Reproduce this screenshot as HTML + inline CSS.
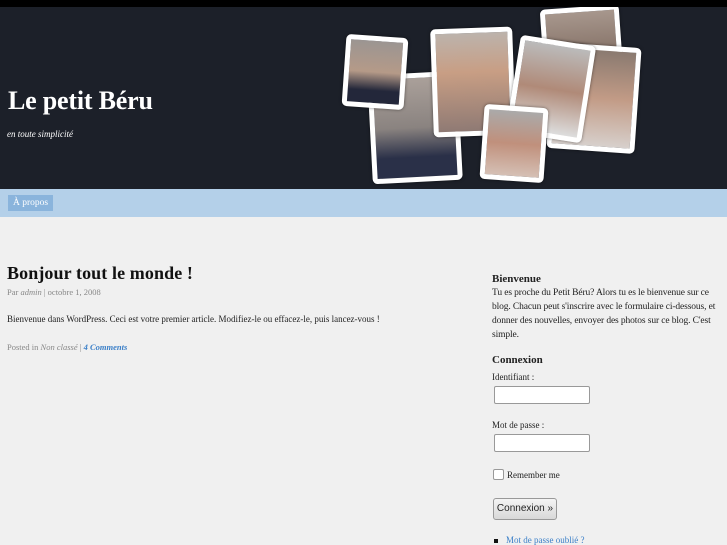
<!DOCTYPE html>
<html><head><meta charset="utf-8"><style>
body{margin:0;width:727px;height:545px;overflow:hidden;background:#f0f0f0;font-family:"Liberation Serif",serif;color:#222;position:relative}
#top{position:absolute;left:0;top:0;width:727px;height:7px;background:#000}
#hdr{position:absolute;left:0;top:7px;width:727px;height:182px;background:#1c2029;overflow:hidden}
#hdr h1{position:absolute;left:8px;top:79px;margin:0;font-size:26px;color:#fff;font-weight:bold;letter-spacing:-0.2px}
#hdr .tag{position:absolute;left:7px;top:122px;font-size:9px;color:#fff;font-style:italic}
.ph{position:absolute;border:5px solid #fff;border-radius:5px;box-shadow:0 0 3px rgba(0,0,0,.5)}
#nav{position:absolute;left:0;top:189px;width:727px;height:28px;background:#b4d0e9}
#nav span{position:absolute;left:8px;top:6px;height:16px;padding:0 5px;background:#8ab4dc;color:#fff;font-size:9.5px;line-height:16px}
h2{position:absolute;left:7px;top:263px;margin:0;font-size:18px;font-weight:bold;color:#111;letter-spacing:0.1px}
.meta{position:absolute;left:7px;top:287px;font-size:8.5px;color:#888}
.p{position:absolute;left:7px;top:314px;font-size:9px;color:#222}
.post{position:absolute;left:7px;top:342px;font-size:8.5px;color:#888}
.post a{color:#3a7fc8;font-weight:bold;font-style:italic}
.sb{position:absolute;left:492px;font-size:9px;color:#222}
.sb h3{margin:0;font-size:11px;font-weight:bold}
input.t{position:absolute;left:494px;width:94px;height:16px;border:1px solid #999;border-radius:2px;background:#fff;padding:0}
</style></head><body>
<div id="top"></div>
<div id="hdr">
<h1>Le petit Béru</h1>
<div class="tag">en toute simplicité</div>
<div class="ph" style="left:370px;top:66px;width:80px;height:99px;background:linear-gradient(#aaa09a,#8a8380 50%,#2a3048 80%);transform:rotate(-3deg)"></div>
<div class="ph" style="left:344px;top:29px;width:52px;height:62px;background:linear-gradient(#9b9592,#b59a88 50%,#23273a 80%);transform:rotate(4deg)"></div>
<div class="ph" style="left:432px;top:21px;width:72px;height:98px;background:linear-gradient(#bcb3ac,#c89e84 40%,#8f7a74);transform:rotate(-2deg)"></div>
<div class="ph" style="left:542px;top:0px;width:69px;height:58px;background:linear-gradient(#a7978d,#7a655a);transform:rotate(-4deg)"></div>
<div class="ph" style="left:550px;top:38px;width:78px;height:96px;background:linear-gradient(#8a7a70,#c29b86 50%,#d7d0cc);transform:rotate(4deg)"></div>
<div class="ph" style="left:513px;top:33px;width:66px;height:88px;background:linear-gradient(#bbb,#b08a78 50%,#ddd);transform:rotate(9deg)"></div>
<div class="ph" style="left:482px;top:99px;width:54px;height:65px;background:linear-gradient(#aaa,#c0907c 50%,#d5c0b5);transform:rotate(4deg)"></div>
</div>
<div id="nav"><span>À propos</span></div>
<h2>Bonjour tout le monde !</h2>
<div class="meta">Par <i>admin</i> | octobre 1, 2008</div>
<div class="p">Bienvenue dans WordPress. Ceci est votre premier article. Modifiez-le ou effacez-le, puis lancez-vous !</div>
<div class="post">Posted in <i>Non classé</i> | <a>4 Comments</a></div>
<div class="sb" style="top:272px;width:228px;line-height:14px;font-size:9.5px;letter-spacing:-0.12px"><h3 style="letter-spacing:0">Bienvenue</h3>Tu es proche du Petit Béru? Alors tu es le bienvenue sur ce blog. Chacun peut s'inscrire avec le formulaire ci-dessous, et donner des nouvelles, envoyer des photos sur ce blog. C'est simple.</div>
<div class="sb" style="top:354px"><h3>Connexion</h3></div>
<div class="sb" style="top:372px">Identifiant :</div>
<input class="t" style="top:386px">
<div class="sb" style="top:420px">Mot de passe :</div>
<input class="t" style="top:434px">
<div style="position:absolute;left:493px;top:469px;width:9px;height:9px;border:1px solid #999;border-radius:2px;background:#fff"></div>
<div class="sb" style="top:470px;left:507px">Remember me</div>
<div style="position:absolute;left:493px;top:498px;width:62px;height:20px;border:1px solid #999;border-radius:3px;background:linear-gradient(#f4f4f4,#d8d8d8);font-family:'Liberation Sans',sans-serif;font-size:10px;line-height:20px;text-align:center;color:#222">Connexion »</div>
<div style="position:absolute;left:494px;top:539px;width:4px;height:4px;background:#111"></div>
<div class="sb" style="top:535px;left:506px;color:#3a7fc8">Mot de passe oublié ?</div>
</body></html>
